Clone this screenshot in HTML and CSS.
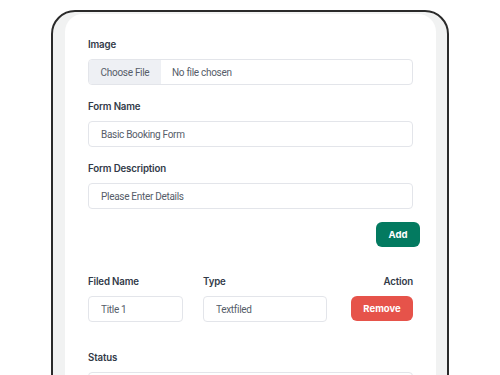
FILE: index.html
```html
<!DOCTYPE html>
<html lang="en">
<head>
    <meta charset="UTF-8">
    <meta name="viewport" content="width=device-width, initial-scale=1.0">
    <title>Form Builder</title>
    <link rel="stylesheet" href="styles.css">
</head>
<body>
    <div class="device">
        <div class="card">
            <div class="group">
                <label class="field-label">Image</label>
                <div class="file-box">
                    <span class="file-btn">Choose File</span>
                    <span class="file-name">No file chosen</span>
                </div>
            </div>

            <div class="group">
                <label class="field-label" for="formName">Form Name</label>
                <input type="text" id="formName" class="text-input" value="Basic Booking Form">
            </div>

            <div class="group">
                <label class="field-label" for="formDesc">Form Description</label>
                <input type="text" id="formDesc" class="text-input" value="Please Enter Details">
            </div>

            <div class="add-row">
                <button class="btn btn-add">Add</button>
            </div>

            <!-- fields table -->
            <div class="fields">
                <span class="field-label">Filed Name</span>
                <span class="field-label">Type</span>
                <span class="field-label right">Action</span>

                <input type="text" class="text-input" value="Title 1">
                <input type="text" class="text-input" value="Textfiled">
                <button class="btn btn-remove">Remove</button>
            </div>

            <div class="group">
                <label class="field-label" for="status">Status</label>
                <input type="text" id="status" class="text-input" value="">
            </div>
        </div>
    </div>
</body>
</html>
```

FILE: styles.css
```css
body {
    margin: 0;
    padding: 0;
    background: #fff;
    font-family: Roboto, "Liberation Sans", Arial, sans-serif;
    overflow: hidden;
}
.device {
    width: 371px;
    height: 420px;
    margin: 10px 0 0 51px;
    padding: 2px 11px 0 12px;
    border: 2px solid #2a2a2a;
    border-radius: 24px;
    background: #f1f2f2;
}
.card {
    background: #fff;
    border-radius: 18px;
    padding: 24px 23px 23px 23px;
}
.group {
    margin-bottom: 15px;
}
.field-label {
    display: block;
    font-family: Inter, "Liberation Sans", sans-serif;
    font-size: 9.7px;
    font-weight: 600;
    line-height: 14px;
    letter-spacing: -0.15px;
    color: #323a48;
    margin-bottom: 7px;
}
.field-label.right {
    text-align: right;
}
.text-input, .file-box {
    box-sizing: border-box;
    width: 100%;
    height: 26px;
    padding: 0 12px;
    font-family: Roboto, "Liberation Sans", sans-serif;
    font-size: 10px;
    letter-spacing: -0.3px;
    color: #565d69;
    border: 1px solid #e3e5ea;
    border-radius: 4px;
    background: #fff;
    outline: none;
}
.file-box {
    display: flex;
    align-items: center;
    padding: 0;
    overflow: hidden;
}
.file-btn {
    display: flex;
    align-items: center;
    justify-content: center;
    width: 72px;
    height: 100%;
    background: #eef0f4;
    color: #565d69;
}
.file-name {
    padding-left: 11px;
}
.add-row {
    display: flex;
    justify-content: flex-end;
    margin: -2px -7px 28px 0;
}
.btn {
    height: 25px;
    border: none;
    border-radius: 6px;
    color: #fff;
    font-family: Inter, "Liberation Sans", sans-serif;
    font-size: 9.5px;
    font-weight: 700;
    cursor: pointer;
}
.btn-add {
    width: 44px;
    background: #037a60;
}
.fields {
    display: grid;
    grid-template-columns: 95px 124px 1fr;
    column-gap: 20px;
    margin-bottom: 29px;
}
.btn-remove {
    width: 62px;
    justify-self: end;
    background: #e6534a;
}
```
